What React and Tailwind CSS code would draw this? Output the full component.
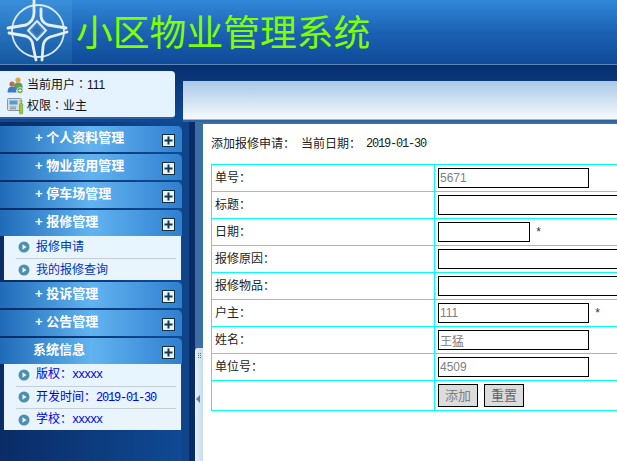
import React from 'react';

const cjk = "font-['Liberation_Sans','Noto_Sans_CJK_SC',sans-serif]";

const Logo = () => (
  <svg width="72" height="64" viewBox="0 0 72 64" fill="none">
    <circle cx="38" cy="31" r="26" stroke="#dce9f6" strokeWidth="1.8" />
    <g stroke="#e6eff8" strokeWidth="2.8" strokeLinecap="round" strokeLinejoin="round">
      <path d="M34 0 L34 13 Q34 21 26 25 L8 28" />
      <path d="M41 9 L41 16 Q41 22 48 25 L66 28" />
      <path d="M9 33 L26 36 Q33 39 33 46 L36 60" />
      <path d="M67 32 L50 37 Q43 40 43 47 L42 60" />
    </g>
    <path d="M37 21 L46 30.5 L37 40 L28 30.5 Z" fill="#3f86c9" stroke="#dce9f6" strokeWidth="2" />
    <path d="M37 25 L42 30.5 L37 36 L32 30.5 Z" fill="#2f6fb4" />
  </svg>
);

const UsersIcon = () => (
  <svg width="17" height="17" viewBox="0 0 17 17">
    <circle cx="11" cy="3" r="2.6" fill="#e9a33e" />
    <path d="M7 9 Q7 5.5 11 5.5 Q15.5 5.5 15.5 9 L15.5 13 L7 13 Z" fill="#5f9e5a" />
    <circle cx="5" cy="7" r="2.6" fill="#b5714a" />
    <path d="M0.5 15.5 Q0.5 9.5 5 9.5 Q9.5 9.5 9.5 15.5 Z" fill="#3f78c4" />
    <circle cx="13" cy="13.5" r="3" fill="#4d9c4a" stroke="#e4f2e0" strokeWidth="0.8" />
    <path d="M13 11.8 V15.2 M11.3 13.5 H14.7" stroke="#fff" strokeWidth="1" />
  </svg>
);

const PermIcon = () => (
  <svg width="17" height="18" viewBox="0 0 17 18">
    <rect x="0.5" y="1.5" width="14" height="12" rx="1" fill="#d5dbe0" stroke="#8796a3" />
    <rect x="2.5" y="3.5" width="8" height="4" fill="#4f9fd6" />
    <path d="M3 10 H9 M3 11.8 H9" stroke="#7d8a96" strokeWidth="1" />
    <circle cx="14" cy="4" r="1.6" fill="#9cc53d" />
    <rect x="12.5" y="6.5" width="3.2" height="10.5" rx="1" fill="#9cc53d" stroke="#5f8a20" strokeWidth="0.5" />
  </svg>
);

const PlusBox = () => (
  <svg width="13" height="13" viewBox="0 0 13 13" className="shrink-0">
    <rect x="0.5" y="0.5" width="12" height="12" fill="#e9f3f6" stroke="#0f2f3f" />
    <path d="M6.5 2.5 V10.5 M2.5 6.5 H10.5" stroke="#123a4e" strokeWidth="2" />
  </svg>
);

const Bullet = () => (
  <svg width="12" height="12" viewBox="0 0 12 12" className="shrink-0">
    <circle cx="6" cy="6" r="5.5" fill="#4f8fae" />
    <path d="M4.5 3.2 L8.5 6 L4.5 8.8 Z" fill="#eef7fb" />
  </svg>
);

const MenuHead = ({ label, plain, last }) => (
  <div className={`h-[26px] ${last ? '' : 'mb-[2px]'} flex items-center rounded-tr-[5px] bg-gradient-to-r from-[#1f6bb8] via-[#62b4f0] to-[#2f7fd0]`}>
    <span className={`${plain ? 'ml-[33px]' : 'ml-[35px]'} pb-[4px] flex-1 text-[13px] font-bold text-white leading-none`}>
      {plain ? label : `+ ${label}`}
    </span>
    <span className="mr-[7px] mt-[3px]"><PlusBox /></span>
  </div>
);

const SubItem = ({ label, value, h }) => (
  <div className={`${h} flex items-center gap-[6px] pl-[14px]`}>
    <Bullet />
    <span className={`flex-1 text-[12px] leading-none ${value !== undefined ? 'text-[#0000ee]' : 'text-[#0033bb]'}`}>
      {label}
      {value !== undefined && <span className="font-['Liberation_Mono',monospace] tracking-[-1.2px]">{value}</span>}
    </span>
  </div>
);

const SubBox = ({ children, h }) => (
  <div className={`${h} ml-[4px] mr-[1px] bg-gradient-to-b from-[#e6f5fe] to-[#eaf4fb] flex flex-col`}>{children}</div>
);

const Divider = () => <div className="h-px ml-[12px] mr-[5px] bg-[#c3ced6]" />;

const Field = ({ value = '', w = 'w-[151px]', star }) => (
  <div className="flex items-center">
    <input
      readOnly
      value={value}
      className={`${w} h-[20px] shrink-0 border border-black bg-white px-[1px] text-[12px] text-[#808080] outline-none ${cjk}`}
    />
    {star && <span className="ml-[5px] mt-[2px] text-[12px] text-[#333] font-['Liberation_Mono',monospace]">*</span>}
  </div>
);

const rows = [
  { label: '单号：', value: '5671' },
  { label: '标题：', w: 'w-[220px]' },
  { label: '日期：', w: 'w-[92px]', star: true },
  { label: '报修原因：', w: 'w-[220px]' },
  { label: '报修物品：', w: 'w-[220px]' },
  { label: '户主：', value: '111', star: true },
  { label: '姓名：', value: '王猛' },
  { label: '单位号：', value: '4509' },
];

const App = () => {
  return (
    <div className={`w-[617px] h-[461px] overflow-hidden flex flex-col bg-white ${cjk}`}>
      {/* Header */}
      <div className="h-[65px] shrink-0 flex border-b border-[#5f86b8] bg-gradient-to-b from-[#3187d8] via-[#1c62b4] to-[#0f4a98]">
        <div className="w-[72px] bg-gradient-to-b from-[#3a8fdc] to-[#14589f]">
          <Logo />
        </div>
        <h1 className="ml-[4px] mt-[13px] text-[36.8px] leading-[42px] font-normal text-[#7fff00] whitespace-nowrap">
          小区物业管理系统
        </h1>
      </div>

      {/* Sub header */}
      <div className="h-[57px] shrink-0 flex bg-gradient-to-b from-[#07306f] to-[#0f4a95]">
        <div className="w-[175px] h-[48px] mt-[6px] pt-[4px] rounded-r-[4px] bg-[#e4f3ff] border-b-2 border-[#2c5d9e] flex flex-col gap-[1px] pl-[7px] text-[12px] text-[#111] font-['Liberation_Sans','Noto_Sans_CJK_TC',sans-serif]">
          <div className="flex items-center gap-[3px] h-[20px]"><UsersIcon />当前用户：111</div>
          <div className="flex items-center gap-[3px] h-[20px]"><PermIcon />权限：业主</div>
        </div>
        <div className="ml-[8px] flex-1 flex flex-col">
          <div className="h-[16px]" />
          <div className="h-[39px] border-b border-[#a9b4c2] bg-gradient-to-b from-[#a9c8e6] to-[#f6fafd]" />
          <div className="flex-1 bg-[#2f659f]" />
        </div>
      </div>

      <div className="flex-1 flex min-h-0">
        {/* Sidebar */}
        <div className="w-[203px] shrink-0 flex">
          <div className="w-[182px] shrink-0 flex flex-col pt-[4px] bg-gradient-to-r from-[#0a2c66] to-[#0f4a95]">
            <MenuHead label="个人资料管理" />
            <MenuHead label="物业费用管理" />
            <MenuHead label="停车场管理" />
            <MenuHead label="报修管理" last />
            <SubBox h="h-[44px] mb-[2px]">
              <SubItem h="h-[22px]" label="报修申请" />
              <Divider />
              <SubItem h="h-[21px]" label="我的报修查询" />
            </SubBox>
            <MenuHead label="投诉管理" />
            <MenuHead label="公告管理" />
            <MenuHead label="系统信息" plain last />
            <SubBox h="h-[66px]">
              <SubItem h="h-[22px]" label="版权：" value="xxxxx" />
              <Divider />
              <SubItem h="h-[22px]" label="开发时间：" value="2019-01-30" />
              <Divider />
              <SubItem h="h-[21px]" label="学校：" value="xxxxx" />
            </SubBox>
          </div>
          <div className="w-[7px] shrink-0 bg-[#0f4488]" />
          <div className="w-[6px] shrink-0 bg-[#0a2c66]" />
          <div className="w-[8px] shrink-0 flex flex-col bg-[#3a6ea5]">
            <div className="h-[226px] shrink-0" />
            <div className="flex-1 relative flex flex-col items-center rounded-tl-[3px] bg-gradient-to-r from-[#e8f1fb] to-[#c4daf3]">
              <div className="mt-[5px] grid grid-cols-2 gap-[1px]">
                {[0, 1, 2, 3, 4, 5].map((i) => (
                  <span key={i} className="w-[1px] h-[1px] bg-[#3f78b8]" />
                ))}
              </div>
              <span className="absolute top-[47px] left-[1px] w-0 h-0 border-y-[4px] border-y-transparent border-r-[4px] border-r-[#5a7fa8]" />
            </div>
          </div>
        </div>

        {/* Content */}
        <div className="flex-1 min-w-0 overflow-hidden bg-white border-t-2 border-[#3a6ea5] pl-[8px] text-[12px] text-[#222]">
          <div className="h-[40px] flex items-center whitespace-nowrap">
            <span>添加报修申请：</span>
            <span className="ml-[6px]">当前日期：</span>
            <span className="ml-[5px] font-['Liberation_Mono',monospace] tracking-[-1.2px]">2019-01-30</span>
          </div>
          <table className="w-[520px] border-collapse table-fixed">
            <colgroup>
              <col className="w-[223px]" />
              <col />
            </colgroup>
            <tbody>
              {rows.map((r) => (
                <tr key={r.label} className="h-[27px]">
                  <td className="border border-[#00ffff] pl-[3px] py-0">{r.label}</td>
                  <td className="border border-[#00ffff] pl-[3px] py-0">
                    <Field value={r.value} w={r.w} star={r.star} />
                  </td>
                </tr>
              ))}
              <tr className="h-[30px]">
                <td className="border border-[#00ffff]" />
                <td className="border border-[#00ffff] pl-[3px] py-0">
                  <div className="flex gap-[6px]">
                    <button className="w-[40px] h-[23px] border border-black bg-[#dcdcdc] text-[13px] text-[#808080]">添加</button>
                    <button className="w-[40px] h-[23px] border border-black bg-[#dcdcdc] text-[13px] text-[#666]">重置</button>
                  </div>
                </td>
              </tr>
            </tbody>
          </table>
        </div>
      </div>
    </div>
  );
};

export default App;
